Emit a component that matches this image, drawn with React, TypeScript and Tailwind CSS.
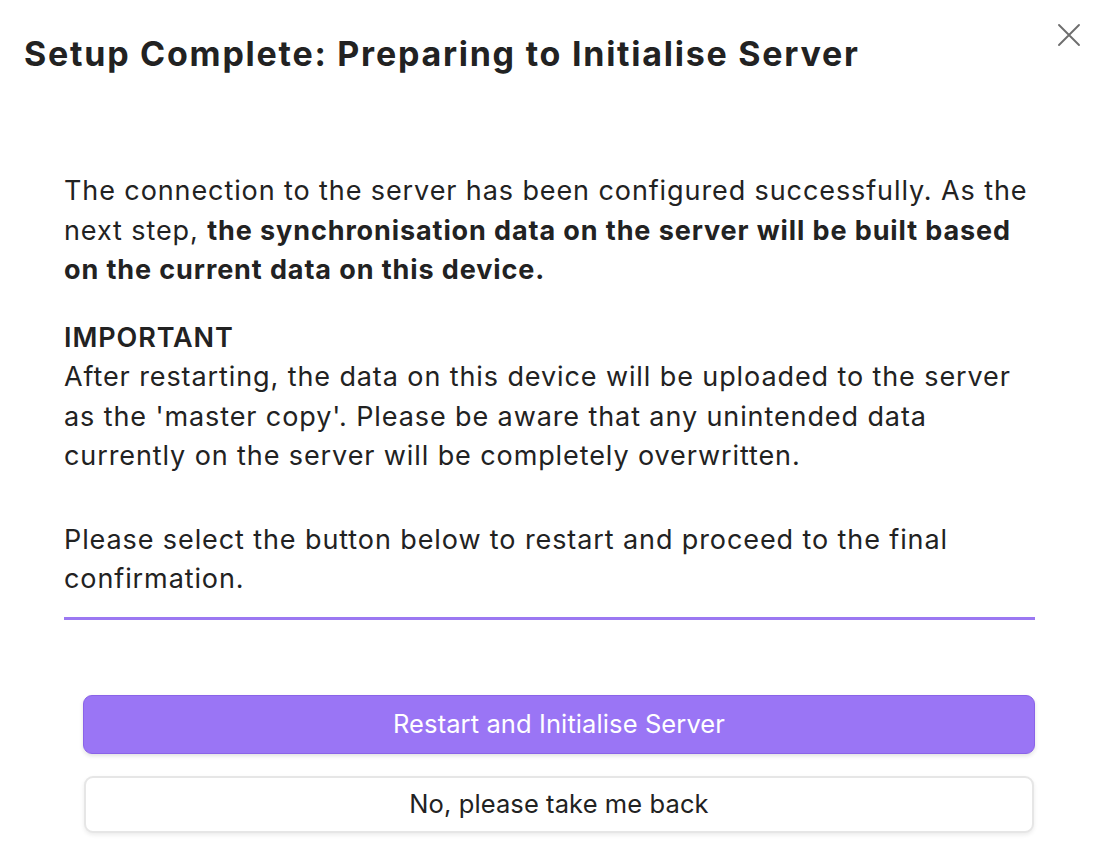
import React from "react";

export default function App() {
  return (
    <div
      className="relative w-[1100px] h-[860px] bg-white text-[#222222] overflow-hidden"
      style={{ fontFamily: "Inter, 'Noto Sans', sans-serif" }}
    >
      <button
        className="absolute right-[18px] top-[22px] w-[26px] h-[26px] flex items-center justify-center text-[#6e6e6e]"
        aria-label="Close"
      >
        <svg width="24" height="24" viewBox="0 0 24 24" fill="none" stroke="currentColor" strokeWidth="1.9" strokeLinecap="round">
          <path d="M2 2L22 22M22 2L2 22" />
        </svg>
      </button>

      <div className="pl-[24px] pt-[34px]">
        <h1 className="text-[34px] leading-[40px] font-bold tracking-[1.75px]">
          Setup Complete: Preparing to Initialise Server
        </h1>
      </div>

      <div className="pl-[64px] pr-[65px] pt-[97px] text-[27px] leading-[39.5px] tracking-[0.9px]">
        <p>
          The connection to the server has been configured successfully. As the next step,{" "}
          <b className="font-bold">the synchronisation data on the server will be built based on the current data on this device.</b>
        </p>
        <p className="mt-[28px]">
          <span className="font-semibold">IMPORTANT</span>
          <br />
          After restarting, the data on this device will be uploaded to the server as the 'master copy'. Please be aware that any unintended data currently on the server will be completely overwritten.
        </p>
        <p className="mt-[44px]">
          Please select the button below to restart and proceed to the final confirmation.
        </p>
        <div className="mt-[18px] h-[3px] bg-[#9b78f2]" />
      </div>

      <div className="pl-[83px] pr-[65px] pt-[75px] flex flex-col gap-[22px]">
        <button className="h-[59px] w-full rounded-[9px] bg-[#9a75f5] border border-[#8a63e8] text-white text-[25.5px] tracking-[0.1px] shadow-[0_2px_4px_rgba(0,0,0,0.12)]">
          Restart and Initialise Server
        </button>
        <button className="h-[57px] w-[950px] ml-[1px] rounded-[9px] bg-white border-2 border-[#e6e6e6] text-[#222222] text-[25.5px] tracking-[0.1px] shadow-[0_2px_4px_rgba(0,0,0,0.08)]">
          No, please take me back
        </button>
      </div>
    </div>
  );
}
